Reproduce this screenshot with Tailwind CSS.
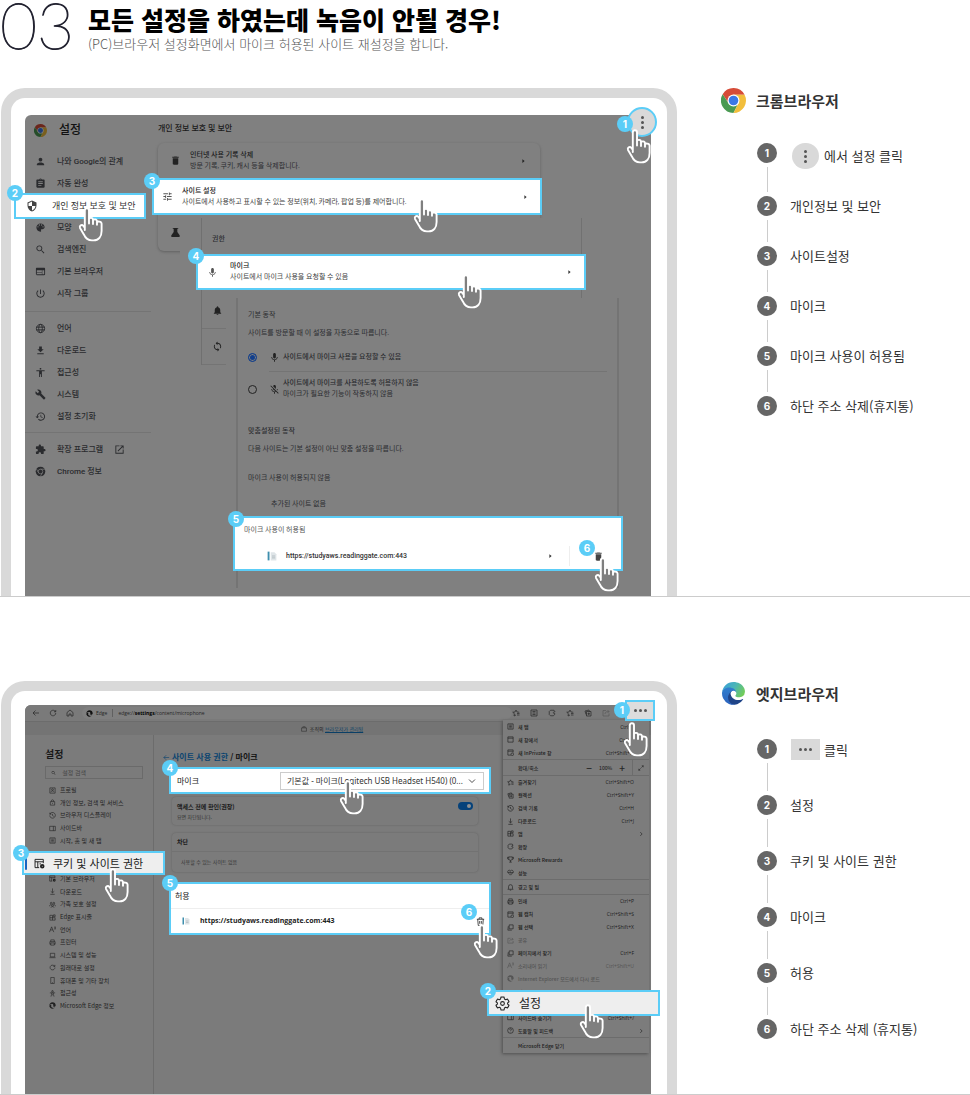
<!DOCTYPE html>
<html lang="ko">
<head>
<meta charset="utf-8">
<meta name="viewport" content="width=device-width, initial-scale=1">
<title>마이크 녹음 설정 안내</title>
<script src="https://cdn.jsdelivr.net/npm/@tailwindcss/browser@4"></script>
</head>
<body class="bg-white font-['Noto_Sans_CJK_KR',sans-serif] text-[#333]">

<!-- Icon library -->
<svg width="0" height="0" class="absolute" aria-hidden="true">
  <defs>
    <symbol id="hand" viewBox="0 0 26 35"><path d="M6.800 23V3.400c0-2.900 4.200-2.900 4.200 0v13.200V12.200c.3-1.900 4-1.800 4 .5v4.300v-3.500c.3-1.700 4-1.500 4 .8v3.500v-2.200c.3-1.600 4.600-1.400 4.600 1.200v7.300c0 5.500-3 9.300-8 9.300h-1.600c-4.200 0-6.500-2-8-5.700L2 20.900c-.9-2.200 1.700-3.900 3.300-2.100L6.800 21" fill="#7f7f7f" stroke="#fff" stroke-width="1.900" stroke-linejoin="round" stroke-linecap="round"/></symbol>
    <symbol id="chrome" viewBox="0 0 48 48"><path d="M24 13H45.300A24 24 0 0 0 3.200 12L14.500 29.500z" fill="#d64c38"/><path d="M14.500 29.500L3.200 12A24 24 0 0 0 24 48L33.500 29.500z" fill="#4a9a52"/><path d="M33.500 29.500L24 48A24 24 0 0 0 45.300 13H24z" fill="#f2be3c"/><circle cx="24" cy="24" r="11.500" fill="#fff"/><circle cx="24" cy="24" r="9.200" fill="#3b78e7"/></symbol>
    <linearGradient id="eg1" x1="0" x2="1" y1=".2" y2=".6"><stop offset="0" stop-color="#3a9fd8"/><stop offset=".5" stop-color="#4ab5b8"/><stop offset="1" stop-color="#72cc58"/></linearGradient>
    <linearGradient id="eg2" x1="0" x2="0" y1="0" y2="1"><stop offset="0" stop-color="#3180cf"/><stop offset="1" stop-color="#2b62bd"/></linearGradient>
    <symbol id="edge" viewBox="0 0 257 256"><path d="M231 190.500c-3.400 1.800-6.900 3.400-10.500 4.700a101.900 101.900 0 0 1-35.900 6.500c-47.300 0-88.500-32.500-88.500-74.300a31.500 31.500 0 0 1 16.400-27.300c-42.800 1.800-53.800 46.400-53.800 72.500 0 74 68.100 81.400 82.800 81.400 7.900 0 19.800-2.300 27-4.600l1.300-.4a128.300 128.300 0 0 0 66.600-52.800 4 4 0 0 0-5.400-5.700z" fill="#1f4488"/><path d="M105.700 241.400a79.200 79.200 0 0 1-22.700-21.300 80.700 80.700 0 0 1 29.500-120c3.200-1.500 8.500-4.100 15.600-4a32.400 32.400 0 0 1 25.700 13 31.900 31.900 0 0 1 6.300 18.700c0-.2 24.500-79.600-80-79.600-43.900 0-80 41.700-80 78.200a130.200 130.200 0 0 0 12.100 56 128 128 0 0 0 156.400 67 75.500 75.500 0 0 1-62.800-8z" fill="url(#eg2)"/><path d="M152.300 148.900c-.9 1-3.400 2.500-3.400 5.700 0 2.600 1.700 5.200 4.800 7.300 14.400 10.100 41.700 8.800 41.800 8.800 10.700 0 21.200-2.900 30.400-8.400A61.900 61.900 0 0 0 256.500 109c.3-22.400-8-37.300-11.300-43.900C224 23.700 178.200 0 128.500 0A128 128 0 0 0 .5 126.200c.5-36.500 36.800-66 80-66 3.500 0 23.500.3 42 10.100 16.300 8.600 24.900 19 30.800 29.200 6.200 10.700 7.300 24.100 7.300 29.500 0 5.300-2.700 13.300-8.300 19.900z" fill="url(#eg1)"/></symbol>
    <symbol id="edgeMono" viewBox="0 0 24 24"><path d="M12 1a11 11 0 0 1 11 10c0 4-4 5-6 5s-3-1-3-2 1-1 1-3-2-4-5-4-7 2-9 5C1 6 6 1 12 1zM9 9c-3 3-2 9 3 11 3 1 6 0 8-1-2 2-5 4-8 4C6 23 1 18 1 13c2-3 5-4 8-4z"/></symbol>
    <symbol id="person" viewBox="0 0 24 24"><path d="M12 12c2.210 0 4-1.790 4-4s-1.790-4-4-4-4 1.790-4 4 1.790 4 4 4zm0 2c-2.670 0-8 1.340-8 4v2h16v-2c0-2.660-5.330-4-8-4z"/></symbol>
    <symbol id="assign" viewBox="0 0 24 24"><path d="M19 3h-4.180C14.400 1.840 13.300 1 12 1s-2.400.84-2.820 2H5c-1.100 0-2 .9-2 2v14c0 1.100.9 2 2 2h14c1.100 0 2-.9 2-2V5c0-1.100-.9-2-2-2zm-7 0c.55 0 1 .45 1 1s-.45 1-1 1-1-.45-1-1 .45-1 1-1zm2 14H7v-2h7v2zm3-4H7v-2h10v2zm0-4H7V7h10v2z"/></symbol>
    <symbol id="shield" viewBox="0 0 24 24"><path d="M12 1L3 5v6c0 5.550 3.840 10.740 9 12 5.160-1.260 9-6.450 9-12V5l-9-4zm0 10.990h7c-.53 4.120-3.280 7.790-7 8.940V12H5V6.300l7-3.110v8.800z"/></symbol>
    <symbol id="palette" viewBox="0 0 24 24"><path d="M12 3c-4.970 0-9 4.030-9 9s4.030 9 9 9c.83 0 1.500-.67 1.500-1.500 0-.39-.15-.74-.39-1.010-.23-.26-.38-.61-.38-.99 0-.83.67-1.500 1.500-1.500H16c2.760 0 5-2.240 5-5 0-4.420-4.030-8-9-8zm-5.500 9c-.83 0-1.500-.67-1.500-1.500S5.670 9 6.500 9 8 9.670 8 10.500 7.330 12 6.500 12zm3-4C8.670 8 8 7.330 8 6.500S8.670 5 9.500 5s1.500.67 1.500 1.500S10.330 8 9.500 8zm5 0c-.83 0-1.500-.67-1.500-1.500S13.670 5 14.500 5s1.500.67 1.500 1.500S15.330 8 14.500 8zm3 4c-.83 0-1.500-.67-1.500-1.500S16.670 9 17.500 9s1.500.67 1.500 1.500-.67 1.500-1.500 1.500z"/></symbol>
    <symbol id="search" viewBox="0 0 24 24"><path d="M15.500 14h-.79l-.28-.27C15.410 12.590 16 11.110 16 9.500 16 5.910 13.090 3 9.500 3S3 5.910 3 9.500 5.910 16 9.500 16c1.610 0 3.090-.59 4.230-1.570l.27.28v.79l5 4.990L20.490 19l-4.990-5zm-6 0C7.010 14 5 11.990 5 9.500S7.010 5 9.500 5 14 7.010 14 9.500 11.990 14 9.500 14z"/></symbol>
    <symbol id="web" viewBox="0 0 24 24"><path d="M20 4H4c-1.100 0-2 .9-2 2v12c0 1.100.9 2 2 2h16c1.100 0 2-.9 2-2V6c0-1.100-.9-2-2-2zm-5 14H4v-4h11v4zm0-5H4V9h11v4zm5 5h-4V9h4v9z"/></symbol>
    <symbol id="power" viewBox="0 0 24 24"><path d="M13 3h-2v10h2V3zm4.830 2.170l-1.420 1.420C17.990 7.860 19 9.810 19 12c0 3.870-3.130 7-7 7s-7-3.130-7-7c0-2.190 1.010-4.140 2.580-5.420L6.170 5.170C4.230 6.820 3 9.260 3 12c0 4.970 4.030 9 9 9s9-4.030 9-9c0-2.740-1.230-5.180-3.170-6.830z"/></symbol>
    <symbol id="globe" viewBox="0 0 24 24"><g fill="none" stroke="currentColor" stroke-width="2"><circle cx="12" cy="12" r="9"/><ellipse cx="12" cy="12" rx="4" ry="9"/><path d="M3.500 9h17M3.500 15h17"/></g></symbol>
    <symbol id="down" viewBox="0 0 24 24"><path d="M19 9h-4V3H9v6H5l7 7 7-7zM5 18v2h14v-2H5z"/></symbol>
    <symbol id="access" viewBox="0 0 24 24"><path d="M12 2c1.100 0 2 .9 2 2s-.9 2-2 2-2-.9-2-2 .9-2 2-2zm9 7h-6v13h-2v-6h-2v6H9V9H3V7h18v2z"/></symbol>
    <symbol id="wrench" viewBox="0 0 24 24"><path d="M22.700 19l-9.100-9.100c.9-2.300.4-5-1.500-6.900-2-2-5-2.400-7.400-1.300L9 6 6 9 1.600 4.700C.4 7.100.9 10.100 2.900 12.100c1.900 1.900 4.600 2.400 6.900 1.500l9.100 9.100c.4.4 1 .4 1.400 0l2.300-2.300c.5-.4.5-1.100.1-1.400z"/></symbol>
    <symbol id="restore" viewBox="0 0 24 24"><path d="M13 3c-4.970 0-9 4.030-9 9H1l3.890 3.890.07.14L9 12H6c0-3.870 3.130-7 7-7s7 3.130 7 7-3.130 7-7 7c-1.930 0-3.680-.79-4.940-2.060l-1.420 1.420C8.270 19.990 10.510 21 13 21c4.970 0 9-4.030 9-9s-4.030-9-9-9zm-1 5v5l4.280 2.540.72-1.210-3.500-2.080V8H12z"/></symbol>
    <symbol id="ext" viewBox="0 0 24 24"><path d="M20.500 11H19V7c0-1.100-.9-2-2-2h-4V3.500C13 2.120 11.880 1 10.500 1S8 2.120 8 3.500V5H4c-1.100 0-1.990.9-1.990 2v3.800H3.500c1.490 0 2.700 1.210 2.700 2.700s-1.210 2.700-2.700 2.700H2V20c0 1.100.9 2 2 2h3.800v-1.500c0-1.490 1.210-2.700 2.700-2.700 1.490 0 2.700 1.210 2.700 2.700V22H17c1.100 0 2-.9 2-2v-4h1.500c1.380 0 2.500-1.120 2.500-2.500S21.880 11 20.500 11z"/></symbol>
    <symbol id="chromeMono" viewBox="0 0 24 24"><circle cx="12" cy="12" r="10.500"/><g fill="none" stroke="#808080" stroke-width="1.500"><circle cx="12" cy="12" r="5"/><path d="M12 7h10M7.700 14.500L2.800 6M16.300 14.500L11.500 23"/></g></symbol>
    <symbol id="open" viewBox="0 0 24 24"><path d="M19 19H5V5h7V3H3v18h18v-9h-2v7zM14 3v2h3.590l-9.830 9.830 1.410 1.410L19 6.410V10h2V3h-7z"/></symbol>
    <symbol id="trash" viewBox="0 0 24 24"><path d="M6 19c0 1.100.9 2 2 2h8c1.100 0 2-.9 2-2V7H6v12zM19 4h-3.500l-1-1h-5l-1 1H5v2h14V4z"/></symbol>
    <symbol id="tune" viewBox="0 0 24 24"><path d="M3 17v2h6v-2H3zM3 5v2h10V5H3zm10 16v-2h8v-2h-8v-2h-2v6h2zM7 9v2H3v2h4v2h2V9H7zm14 4v-2H11v2h10zm-6-4h2V7h4V5h-4V3h-2v6z"/></symbol>
    <symbol id="flask" viewBox="0 0 24 24"><path d="M6 2h12v2h-2v7l5 7c1 2 0 4-2 4H5c-2 0-3-2-2-4l5-7V4H6z"/></symbol>
    <symbol id="mic" viewBox="0 0 24 24"><path d="M12 14c1.660 0 3-1.340 3-3V5c0-1.660-1.340-3-3-3S9 3.340 9 5v6c0 1.660 1.340 3 3 3zm5.300-3c0 3-2.540 5.100-5.300 5.100S6.700 14 6.700 11H5c0 3.410 2.720 6.230 6 6.720V21h2v-3.280c3.280-.48 6-3.300 6-6.720h-1.700z"/></symbol>
    <symbol id="micoff" viewBox="0 0 24 24"><path d="M19 11h-1.700c0 .74-.16 1.430-.43 2.050l1.230 1.230c.56-.98.9-2.090.9-3.280zm-4.020.17L15 11V5c0-1.660-1.340-3-3-3S9 3.340 9 5v.18l5.980 5.990zM4.270 3L3 4.270l6.010 6.010V11c0 1.660 1.330 3 2.990 3 .22 0 .44-.03.65-.08l1.660 1.660c-.71.33-1.500.52-2.310.52-2.760 0-5.300-2.100-5.300-5.100H5c0 3.410 2.720 6.230 6 6.720V21h2v-3.280c.91-.13 1.770-.45 2.540-.9L19.730 21 21 19.730 4.270 3z"/></symbol>
    <symbol id="bell" viewBox="0 0 24 24"><path d="M12 22c1.100 0 2-.9 2-2h-4c0 1.100.89 2 2 2zm6-6v-5c0-3.070-1.640-5.640-4.500-6.320V4c0-.83-.67-1.500-1.500-1.500s-1.500.67-1.500 1.500v.68C7.630 5.360 6 7.920 6 11v5l-2 2v1h16v-1l-2-2z"/></symbol>
    <symbol id="sync" viewBox="0 0 24 24"><path d="M12 4V1L8 5l4 4V6c3.310 0 6 2.690 6 6 0 1.010-.25 1.970-.7 2.800l1.460 1.460C19.540 15.030 20 13.570 20 12c0-4.420-3.580-8-8-8zm0 14c-3.310 0-6-2.690-6-6 0-1.010.25-1.970.7-2.800L5.240 7.740C4.460 8.970 4 10.430 4 12c0 4.420 3.580 8 8 8v3l4-4-4-4v3z"/></symbol>
    <symbol id="tri" viewBox="0 0 8 10"><path d="M1 0l6 5-6 5z"/></symbol>
    <symbol id="fav" viewBox="0 0 16 16"><path d="M1 1h3v14H1z" fill="#3f8fae"/><path d="M6 2h6l3 3v10H6z" fill="#dfe5e8"/><path d="M8 8h5M8 11h5" stroke="#9aa7ad"/></symbol>
    <!-- Outline icons -->
    <symbol id="back" viewBox="0 0 16 16" fill="none" stroke="currentColor" stroke-width="1.400"><path d="M14 8H2M7 3L2 8l5 5"/></symbol>
    <symbol id="reload" viewBox="0 0 16 16" fill="none" stroke="currentColor" stroke-width="1.400"><path d="M13.500 8A5.500 5.500 0 1 1 11.500 3.800L13.500 5.500M13.500 2v3.500H10"/></symbol>
    <symbol id="home" viewBox="0 0 16 16" fill="none" stroke="currentColor" stroke-width="1.400"><path d="M2 7l6-5 6 5v7h-4v-4H6v4H2z"/></symbol>
    <symbol id="star" viewBox="0 0 16 16" fill="none" stroke="currentColor" stroke-width="1.400"><path d="M8 12l-4 2 .8-4.500L1.500 6.500 6 6l2-4 2 4 4.500.5M10 9h5M10 12h5"/></symbol>
    <symbol id="panel" viewBox="0 0 16 16" fill="none" stroke="currentColor" stroke-width="1.400"><path d="M2 2h12v12H2zM5 5h6M5 8h6M5 11h6"/></symbol>
    <symbol id="win" viewBox="0 0 16 16" fill="none" stroke="currentColor" stroke-width="1.400"><path d="M2 2h12v12H2zM2 5h12"/></symbol>
    <symbol id="winp" viewBox="0 0 16 16" fill="none" stroke="currentColor" stroke-width="1.400"><path d="M9 14H2V2h12v6M2 5h12"/><circle cx="12" cy="12" r="3"/></symbol>
    <symbol id="puzzle" viewBox="0 0 16 16" fill="none" stroke="currentColor" stroke-width="1.400"><path d="M10 2.500H5L2.500 5v6L5 13.500h6l2.500-3V9c-4 .5-4-3.500 0-3V4.500L12 2.500z"/></symbol>
    <symbol id="coll" viewBox="0 0 16 16" fill="none" stroke="currentColor" stroke-width="1.400"><path d="M4 11L2 4l8-2 1 3M5 5h9v9H5zM9.500 7v5M7 9.500h5"/></symbol>
    <symbol id="clock" viewBox="0 0 16 16" fill="none" stroke="currentColor" stroke-width="1.400"><path d="M2 5a6.500 6.500 0 1 1-.5 3M2 1.500V5h3.500M8 4.500V8l3 2"/></symbol>
    <symbol id="dl" viewBox="0 0 16 16" fill="none" stroke="currentColor" stroke-width="1.400"><path d="M8 1v10M4 7.500L8 11l4-3.500M3 14.500h10"/></symbol>
    <symbol id="apps" viewBox="0 0 16 16" fill="none" stroke="currentColor" stroke-width="1.400"><path d="M2 3h6v11H2zM2 8.500h12V14H8M10 2h4v4h-4z"/></symbol>
    <symbol id="cup" viewBox="0 0 16 16" fill="none" stroke="currentColor" stroke-width="1.400"><path d="M4 2h8v5c0 4-8 4-8 0zM4 3H1c0 4 1 5 3 5M12 3h3c0 4-1 5-3 5M8 10v4M5 14h6"/></symbol>
    <symbol id="heart" viewBox="0 0 16 16" fill="none" stroke="currentColor" stroke-width="1.400"><path d="M8 14L2 8c-2-4 3-7 6-4 3-3 8 0 6 4zM2 8h4l1-2 2 4 1-2h4"/></symbol>
    <symbol id="bello" viewBox="0 0 16 16" fill="none" stroke="currentColor" stroke-width="1.400"><path d="M2 12h12l-1.500-2V6a4.500 4.500 0 0 0-9 0v4zM6.500 14h3"/></symbol>
    <symbol id="print" viewBox="0 0 16 16" fill="none" stroke="currentColor" stroke-width="1.400"><path d="M4 6V2h8v4M4 12H2V6h12v6h-2M4 9h8v5H4z"/></symbol>
    <symbol id="copy" viewBox="0 0 16 16" fill="none" stroke="currentColor" stroke-width="1.400"><path d="M5 2h9v9H5zM3 5L2 14h9"/></symbol>
    <symbol id="share" viewBox="0 0 16 16" fill="none" stroke="currentColor" stroke-width="1.400"><path d="M8 3H2v11h12V9M6 10c0-4 3-5 8-5M11 2l3 3-3 3"/></symbol>
    <symbol id="read" viewBox="0 0 16 16" fill="none" stroke="currentColor" stroke-width="1.400"><path d="M1 14L6 2l5 12M3 9h6M12 2c2 1 2 4 0 5M14 1c2 2 2 5 0 7"/></symbol>
    <symbol id="help" viewBox="0 0 16 16" fill="none" stroke="currentColor" stroke-width="1.400"><circle cx="8" cy="8" r="6.500"/><path d="M6 6c0-3 4-2.500 4 0 0 1.500-2 1.500-2 3M8 11v1"/></symbol>
    <symbol id="user" viewBox="0 0 16 16" fill="none" stroke="currentColor" stroke-width="1.400"><path d="M2 2h12v12H2zM5 11c0-3 6-3 6 0"/><circle cx="8" cy="6" r="2"/></symbol>
    <symbol id="lock" viewBox="0 0 16 16" fill="none" stroke="currentColor" stroke-width="1.400"><path d="M3 6h10v8H3zM5.500 6V4c0-3 5-3 5 0v2M8 9v2"/></symbol>
    <symbol id="side" viewBox="0 0 16 16" fill="none" stroke="currentColor" stroke-width="1.400"><path d="M1.500 3h13v10h-13zM10 3v10"/></symbol>
    <symbol id="family" viewBox="0 0 16 16" fill="none" stroke="currentColor" stroke-width="1.400"><circle cx="5" cy="5" r="2"/><circle cx="11" cy="5" r="2"/><circle cx="8" cy="10" r="2"/><path d="M1.500 12c0-4 3-4 3.500-3M14.500 12c0-4-3-4-3.500-3M4.500 15c0-3 7-3 7 0"/></symbol>
    <symbol id="laptop" viewBox="0 0 16 16" fill="none" stroke="currentColor" stroke-width="1.400"><path d="M3 3h10v8H3zM1 13h14"/></symbol>
    <symbol id="phone" viewBox="0 0 16 16" fill="none" stroke="currentColor" stroke-width="1.400"><path d="M4 1h8v14H4zM7 13h2"/></symbol>
    <symbol id="man" viewBox="0 0 16 16" fill="none" stroke="currentColor" stroke-width="1.400"><circle cx="8" cy="3" r="1.800"/><path d="M2 6.500h12M6 6.500V10L4.500 15M10 6.500V10l1.500 5M8 10v2"/></symbol>
    <symbol id="caseI" viewBox="0 0 16 16" fill="none" stroke="currentColor" stroke-width="1.400"><path d="M1.500 5h13v9h-13zM5 5V2h6v3"/></symbol>
    <symbol id="chev" viewBox="0 0 16 16" fill="none" stroke="currentColor" stroke-width="1.600"><path d="M6 3l5 5-5 5"/></symbol>
    <symbol id="chevd" viewBox="0 0 16 16" fill="none" stroke="currentColor" stroke-width="1.600"><path d="M2 5l6 6 6-6"/></symbol>
    <symbol id="full" viewBox="0 0 16 16" fill="none" stroke="currentColor" stroke-width="1.600"><path d="M9 7l5-5M10 2h4v4M7 9l-5 5M6 14H2v-4"/></symbol>
    <symbol id="bin" viewBox="0 0 16 16" fill="none" stroke="currentColor" stroke-width="1.400"><path d="M1.500 4h13M5.500 4V1.500h5V4M3 4l1 11h8l1-11M6.500 7v5M9.500 7v5"/></symbol>
    <symbol id="cookie" viewBox="0 0 16 16" fill="none" stroke="currentColor" stroke-width="1.400"><path d="M7.500 14h-6V2h12v5.500M1.500 5.500h12M5.500 5.500V14M8 8.500h2"/><circle cx="12" cy="12" r="2" stroke-width="2.600"/></symbol>
    <symbol id="gear" viewBox="0 0 24 24" fill="none" stroke="currentColor" stroke-width="1.700" stroke-linejoin="round"><path d="M12 1.500c.9 0 1.700.1 2.500.3l.6 3 2 1.100 2.800-1c1.100 1.300 2 2.700 2.500 4.300L20.200 11.100v1.800l2.200 1.900c-.5 1.600-1.400 3-2.500 4.300l-2.800-1-2 1.100-.6 3c-1.600.4-3.400.4-5 0l-.6-3-2-1.100-2.800 1c-1.100-1.300-2-2.700-2.500-4.300l2.200-1.900v-1.800L1.600 9.200c.5-1.600 1.400-3 2.500-4.300l2.800 1 2-1.100.6-3c.8-.2 1.600-.3 2.500-.3z"/><circle cx="12" cy="12" r="3"/></symbol>
  </defs>
</svg>

<header class="flex h-[88px] items-start">
  <span class="w-[88px] shrink-0 font-['Lato'] text-[64px] leading-[50px] font-extralight text-[#222230] [-webkit-text-stroke:1px_#222230]">03</span>
  <div class="pt-1">
    <h1 class="text-[25px] leading-[30px] font-black text-black">모든 설정을 하였는데 녹음이 안될 경우!</h1>
    <p class="text-[13px] leading-5 font-light text-[#555]">(PC)브라우저 설정화면에서 마이크 허용된 사이트 재설정을 합니다.</p>
  </div>
</header>

<main>
<!-- Chrome -->
<section class="flex border-b border-[#ccc]">
  <div class="ml-px min-w-0 flex-1 rounded-t-[24px] border-x-10 border-t-10 border-[#d9d9d9] pt-[17px] pr-4 pl-[14px]">
    <div class="relative flex min-h-[481px] rounded-tl-md bg-[#808080] font-['Roboto','Noto_Sans_CJK_KR',sans-serif] text-[7px] leading-[11px] text-[#2c2d30]">

      <nav class="w-[126px] shrink-0 text-[8px] font-medium text-[#2a2b2e]">
        <h2 class="flex h-[35px] items-center gap-3 pb-1 pl-[9px] text-[12px] font-medium text-[#111]"><svg class="size-[13px] brightness-50"><use href="#chrome"/></svg>설정</h2>
        <ul data-nav="chrome1"></ul>
        <ul class="mt-[7px] border-t border-[#747474] pt-[5px]" data-nav="chrome2"></ul>
        <ul class="mt-[5px] border-t border-[#747474] pt-[5px]" data-nav="chrome3"></ul>
      </nav>

      <div class="min-w-0 flex-1 pr-[111px] pl-[7px]">
        <h3 class="flex h-7 items-center pb-[2px] text-[8px] font-medium text-[#1a1a1a]">개인 정보 보호 및 보안</h3>
        <div class="h-[108px] rounded-md shadow-[0_1px_3px_#606060]">
          <button type="button" class="flex h-[35px] w-full items-center gap-[9px] pr-[15px] pl-3 text-left">
            <svg class="size-[11px] fill-[#222]"><use href="#trash"/></svg>
            <span class="flex-1"><b class="block font-medium text-[#1c1c1e]">인터넷 사용 기록 삭제</b>방문 기록, 쿠키, 캐시 등을 삭제합니다.</span>
            <svg class="h-1 w-[3px] fill-[#222]"><use href="#tri"/></svg>
          </button>
          <svg class="mt-[49px] ml-3 size-[11px] fill-[#222]"><use href="#flask"/></svg>
        </div>
      </div>

      <!-- Permission panel stacked over the privacy card -->
      <div class="absolute top-[103px] right-[69px] left-[155px] h-[80px] bg-[#808080]"></div>
      <div class="absolute top-[103px] left-[176px] flex h-[147px] w-8 flex-col items-center border-l border-[#707070] bg-[#808080] pt-[87px]">
        <svg class="size-[11px] fill-[#222]"><use href="#bell"/></svg>
        <span class="mt-3 w-6 self-start border-t border-[#747474]"></span>
        <svg class="mt-3 size-[11px] fill-[#222]"><use href="#sync"/></svg>
        <span class="mt-3 w-6 self-start border-t border-[#747474]"></span>
      </div>
      <div class="absolute top-[103px] right-[69px] left-[177px] h-[80px] border-r border-[#717171] px-[10px] pt-4 font-medium">권한</div>

      <!-- Microphone panel -->
      <fieldset class="absolute top-[183px] right-[32px] left-[211px] min-h-[290px] border-x-2 border-[#747474] bg-[#808080] px-[10px]">
        <p class="pt-3">기본 동작</p>
        <p class="mt-[7px]">사이트를 방문할 때 이 설정을 자동으로 따릅니다.</p>
        <label class="mt-[5px] flex h-[27px] items-center">
          <input type="radio" name="mic" checked class="size-[9px] appearance-none rounded-full border border-[#123f8c] bg-[#123f8c] shadow-[inset_0_0_0_1px_#808080]">
          <svg class="ml-3 size-[11px] fill-[#222]"><use href="#mic"/></svg><span class="ml-[3px] font-medium">사이트에서 마이크 사용을 요청할 수 있음</span>
        </label>
        <div class="ml-[21px] border-t border-[#747474]"></div>
        <label class="mt-[6px] flex items-center">
          <input type="radio" name="mic" class="size-[9px] appearance-none rounded-full border border-[#222]">
          <svg class="ml-3 size-[11px] fill-[#222]"><use href="#micoff"/></svg><span class="ml-[3px]"><b class="block font-medium">사이트에서 마이크를 사용하도록 허용하지 않음</b>마이크가 필요한 기능이 작동하지 않음</span>
        </label>
        <p class="mt-[26px] font-medium">맞춤설정된 동작</p>
        <p class="mt-[7px]">다음 사이트는 기본 설정이 아닌 맞춤 설정을 따릅니다.</p>
        <p class="mt-[18px]">마이크 사용이 허용되지 않음</p>
        <p class="mt-[15px] ml-[23px]">추가된 사이트 없음</p>
      </fieldset>

      <!-- Highlighted steps -->
      <button type="button" aria-label="더보기" class="absolute -top-2 right-[-6px] flex size-[30px] flex-col items-center justify-center gap-[2px] rounded-full border-2 border-[#5bcdf7] bg-[#d9d9d9]"><i class="size-[3px] rounded-full bg-[#555]"></i><i class="size-[3px] rounded-full bg-[#555]"></i><i class="size-[3px] rounded-full bg-[#555]"></i></button>
      <a href="#" class="absolute top-[78px] left-[-11px] flex h-[26px] w-[132px] items-center gap-[14px] border-2 border-[#5bcdf7] bg-white pl-[10px] text-[9px] text-[#333]"><svg class="size-3 fill-[#444]"><use href="#shield"/></svg>개인 정보 보호 및 보안</a>
      <button type="button" class="absolute top-[63px] right-[109px] left-[127px] flex h-[37px] items-center gap-[9px] border-2 border-[#5bcdf7] bg-white pr-[13px] pl-[8px] text-left text-[#444]">
        <svg class="size-[11px] fill-[#555]"><use href="#tune"/></svg>
        <span class="flex-1"><b class="block font-medium text-[#222]">사이트 설정</b>사이트에서 사용하고 표시할 수 있는 정보(위치, 카메라, 팝업 등)를 제어합니다.</span>
        <svg class="h-1 w-[3px] fill-[#333]"><use href="#tri"/></svg>
      </button>
      <button type="button" class="absolute top-[139px] right-[65px] left-[171px] flex h-9 items-center gap-3 border-2 border-[#5bcdf7] bg-white pr-[13px] pl-[9px] text-left text-[#444]">
        <svg class="size-[11px] fill-[#555]"><use href="#mic"/></svg>
        <span class="flex-1"><b class="block font-medium text-[#222]">마이크</b>사이트에서 마이크 사용을 요청할 수 있음</span>
        <svg class="h-1 w-[3px] fill-[#333]"><use href="#tri"/></svg>
      </button>
      <div class="absolute top-[401px] right-[28px] left-[208px] h-[55px] border-2 border-[#5bcdf7] bg-white text-[#555]">
        <p class="pt-[7px] pl-[9px]">마이크 사용이 허용됨</p>
        <div class="mt-[9px] flex h-[22px] items-center pr-[17px] pl-8">
          <svg class="size-[10px]"><use href="#fav"/></svg>
          <a href="#" class="ml-[9px] flex-1 font-medium text-[#333]">https://studyaws.readinggate.com:443</a>
          <svg class="h-1 w-[3px] fill-[#333]"><use href="#tri"/></svg>
          <i class="mx-[17px] h-5 border-l border-[#eee]"></i>
          <button type="button" aria-label="삭제" class="ml-[6px]"><svg class="size-[11px] fill-[#444]"><use href="#trash"/></svg></button>
        </div>
      </div>

      <span class="absolute top-[1px] right-[18px] size-4 rounded-full bg-[#5bcdf7] text-center font-['Inter'] text-[10px] leading-4 font-bold text-white">1</span>
      <span class="absolute top-[70px] left-[-18px] size-4 rounded-full bg-[#5bcdf7] text-center font-['Inter'] text-[10px] leading-4 font-bold text-white">2</span>
      <span class="absolute top-[58px] left-[119px] size-4 rounded-full bg-[#5bcdf7] text-center font-['Inter'] text-[10px] leading-4 font-bold text-white">3</span>
      <span class="absolute top-[133px] left-[163px] size-4 rounded-full bg-[#5bcdf7] text-center font-['Inter'] text-[10px] leading-4 font-bold text-white">4</span>
      <span class="absolute top-[396px] left-[203px] size-4 rounded-full bg-[#5bcdf7] text-center font-['Inter'] text-[10px] leading-4 font-bold text-white">5</span>
      <span class="absolute top-[425px] right-[56px] size-4 rounded-full bg-[#5bcdf7] text-center font-['Inter'] text-[10px] leading-4 font-bold text-white">6</span>
      <svg class="absolute top-[14px] right-[-1px] h-[35px] w-[26px]"><use href="#hand"/></svg>
      <svg class="absolute top-[92px] left-[53px] h-[35px] w-[26px]"><use href="#hand"/></svg>
      <svg class="absolute top-[83px] right-[212px] h-[35px] w-[26px]"><use href="#hand"/></svg>
      <svg class="absolute top-[159px] right-[168px] h-[35px] w-[26px]"><use href="#hand"/></svg>
      <svg class="absolute top-[442px] right-[31px] h-[35px] w-[26px]"><use href="#hand"/></svg>
    </div>
  </div>

  <aside class="w-[293px] shrink-0 pl-11">
    <h2 class="flex h-[25px] items-center gap-[10px] text-[15px] leading-5 font-bold"><svg class="size-[25px]"><use href="#chrome"/></svg>크롬브라우저</h2>
    <ol class="mt-[30px] pl-9 text-[13px] leading-5" data-steps="chrome"></ol>
  </aside>
</section>

<!-- Edge -->
<section class="mt-[84px] flex border-b border-[#ccc]">
  <div class="ml-px min-w-0 flex-1 rounded-t-[24px] border-x-10 border-t-10 border-[#d9d9d9] pt-[14px] pr-4 pl-[14px]">
    <div class="relative min-h-[389px] rounded-tl-md bg-[#7b7b7b] text-[6px] leading-[8px] text-[#262626]">
      <div class="flex h-4 items-center rounded-tl-md bg-[#7a7a7a] pl-[7px] text-[5px]">
        <svg class="size-2"><use href="#back"/></svg>
        <svg class="ml-[9px] size-2"><use href="#reload"/></svg>
        <svg class="ml-[9px] size-2"><use href="#home"/></svg>
        <div class="ml-2 flex h-3 flex-1 items-center rounded-full bg-[#7f7f7f] pl-1 font-['Open_Sans']"><svg class="size-[7px] fill-[#111]"><use href="#edgeMono"/></svg><span class="ml-[3px]">Edge</span><i class="mx-[5px] h-2 border-l border-[#606060]"></i><span>edge://<b class="text-black">settings</b>/content/microphone</span></div>
        <div class="flex items-center gap-[10px] pr-[41px]"><svg class="size-2"><use href="#star"/></svg><svg class="size-2"><use href="#panel"/></svg><svg class="size-2"><use href="#puzzle"/></svg><svg class="size-2"><use href="#star"/></svg><svg class="size-2"><use href="#coll"/></svg><svg class="size-2 opacity-40"><use href="#share"/></svg></div>
      </div>
      <div class="flex h-[14px] items-center justify-center gap-[3px] border-t border-[#6c6c6c] bg-[#747474] pr-3 text-[5px]"><svg class="size-[6px]"><use href="#caseI"/></svg><span>조직의 <a href="#" class="text-[#0a3f66] underline">브라우저가 관리됨</a></span></div>
      <div class="flex min-h-[359px]">
        <nav class="w-[129px] shrink-0 border-r border-[#6c6c6c] pr-[10px] pl-5">
          <h2 class="pt-[13px] text-[10px] leading-3 font-bold text-[#181818]">설정</h2>
          <label class="mt-[6px] flex h-[13px] items-center gap-[6px] border border-[#6a6a6a] pl-[5px]"><svg class="size-[6px] fill-[#222]"><use href="#search"/></svg><input type="search" aria-label="설정 검색" placeholder="설정 검색" class="w-full min-w-0 bg-transparent text-[6px] outline-none placeholder:text-[#444]"></label>
          <ul class="mt-[5px] flex h-[228px] flex-col justify-between pl-1 text-[#222]" data-nav="edge"></ul>
        </nav>
        <div class="min-w-0 flex-1 pr-[173px] pl-[9px]">
          <h3 class="flex items-center gap-[2px] pt-4 text-[8px] leading-3 font-bold text-[#111]"><svg class="size-[7px] text-[#0a4470]"><use href="#back"/></svg><span><a href="#" class="text-[#0a4470]">사이트 사용 권한</a> / 마이크</span></h3>
          <div class="mt-[34px] ml-[9px] flex h-7 items-start justify-between rounded-sm p-[5px] shadow-[0_0_2px_#606060]">
            <label for="ask" class="pt-px"><b class="block font-bold text-[#1a1a1a]">액세스 전에 확인(권장)</b><span class="block pt-[2px] text-[5px] text-[#333]">요면 차단됩니다.</span></label>
            <span class="relative flex"><input id="ask" type="checkbox" checked class="h-2 w-[15px] appearance-none rounded-full bg-[#06427a]"><i class="pointer-events-none absolute top-[2px] right-[2px] size-1 rounded-full bg-[#909090]"></i></span>
          </div>
          <div class="mt-2 ml-[9px] h-[39px] rounded-sm shadow-[0_0_2px_#606060]">
            <b class="flex h-[19px] items-center border-b border-[#727272] pl-[5px] font-bold text-[#1a1a1a]">차단</b>
            <p class="flex h-[19px] items-center pl-[9px] text-[5px] text-[#333]">사용할 수 있는 사이트 없음</p>
          </div>
        </div>
      </div>

      <!-- Browser menu -->
      <div class="absolute top-[15px] right-[2px] w-[146px] bg-[#7c7c7c] text-[5px] font-medium shadow-[-1px_1px_3px_#505050]">
        <ul class="h-[40px] border-b border-[#6c6c6c]" data-menu="a"></ul>
        <div class="flex h-4 items-center border-b border-[#6c6c6c] pl-[15px]"><span class="flex-1">확대/축소</span><button type="button" class="text-[10px]" aria-label="축소">−</button><span class="mx-[7px]">100%</span><button type="button" class="text-[10px]" aria-label="확대">+</button><i class="ml-[7px] h-4 border-l border-[#6c6c6c]"></i><svg class="mr-[5px] ml-[5px] size-[6px]"><use href="#full"/></svg></div>
        <ul class="h-[104px] border-b border-[#6c6c6c]" data-menu="b"></ul>
        <ul class="h-[15px] border-b border-[#6c6c6c]" data-menu="c"></ul>
        <ul class="h-[143px] border-b border-[#6c6c6c]" data-menu="d"></ul>
        <ul class="h-[15px]" data-menu="e"></ul>
      </div>

      <!-- Highlighted steps -->
      <button type="button" aria-label="설정 및 기타" class="absolute top-[-5px] right-[-4px] flex h-[21px] w-[30px] items-center justify-center gap-[2px] border-2 border-[#5bcdf7] bg-[#ddd]"><i class="size-[3px] rounded-full bg-[#555]"></i><i class="size-[3px] rounded-full bg-[#555]"></i><i class="size-[3px] rounded-full bg-[#555]"></i></button>
      <a href="#" class="absolute top-[285px] right-[-9px] flex h-[26px] w-[173px] items-center gap-[9px] border-2 border-[#5bcdf7] bg-[#eee] pl-[6px] text-[12px] text-[#222]"><svg class="size-[15px]"><use href="#gear"/></svg>설정</a>
      <a href="#" class="absolute top-[146px] left-[-3px] flex h-6 w-[143px] items-center border-2 border-[#5bcdf7] bg-[#eee] pl-px text-[11px] text-[#222]"><i class="h-[14px] w-[2px] rounded bg-[#1765c1]"></i><svg class="mr-2 ml-[7px] size-[11px]"><use href="#cookie"/></svg>쿠키 및 사이트 권한</a>
      <div class="absolute top-[62px] right-[160px] left-[144px] flex h-[27px] items-center justify-between border-2 border-[#5bcdf7] bg-white pr-[5px] pl-[6px] text-[8px] text-[#222]">
        <label for="micsel">마이크</label>
        <span class="relative flex items-center"><select id="micsel" class="h-[18px] w-[204px] appearance-none border border-[#ccc] bg-white px-[6px] font-['Noto_Sans','Noto_Sans_CJK_KR',sans-serif] text-[8px] text-[#333]"><option>기본값 - 마이크(Logitech USB Headset H540) (0...</option></select><svg class="pointer-events-none absolute right-2 size-2"><use href="#chevd"/></svg></span>
      </div>
      <div class="absolute top-[177px] right-[160px] left-[144px] h-[53px] border-2 border-[#5bcdf7] bg-white text-[8px] text-[#222]">
        <p class="flex h-[25px] items-center border-b border-[#eee] pl-1">허용</p>
        <div class="flex h-6 items-center pr-1 pl-[11px]"><svg class="size-2"><use href="#fav"/></svg><a href="#" class="ml-[10px] flex-1 font-['Open_Sans'] text-[7px] font-bold">https://studyaws.readinggate.com:443</a><button type="button" aria-label="삭제"><svg class="size-[9px]"><use href="#bin"/></svg></button></div>
      </div>

      <span class="absolute top-[-3px] right-[21px] size-4 rounded-full bg-[#5bcdf7] text-center font-['Inter'] text-[10px] leading-4 font-bold text-white">1</span>
      <span class="absolute top-[278px] right-[155px] size-4 rounded-full bg-[#5bcdf7] text-center font-['Inter'] text-[10px] leading-4 font-bold text-white">2</span>
      <span class="absolute top-[140px] left-[-12px] size-4 rounded-full bg-[#5bcdf7] text-center font-['Inter'] text-[10px] leading-4 font-bold text-white">3</span>
      <span class="absolute top-[55px] left-[137px] size-4 rounded-full bg-[#5bcdf7] text-center font-['Inter'] text-[10px] leading-4 font-bold text-white">4</span>
      <span class="absolute top-[170px] left-[137px] size-4 rounded-full bg-[#5bcdf7] text-center font-['Inter'] text-[10px] leading-4 font-bold text-white">5</span>
      <span class="absolute top-[199px] right-[174px] size-4 rounded-full bg-[#5bcdf7] text-center font-['Inter'] text-[10px] leading-4 font-bold text-white">6</span>
      <svg class="absolute top-[17px] right-[2px] h-[35px] w-[26px]"><use href="#hand"/></svg>
      <svg class="absolute top-[299px] right-[46px] h-[35px] w-[26px]"><use href="#hand"/></svg>
      <svg class="absolute top-[163px] left-[79px] h-[35px] w-[26px]"><use href="#hand"/></svg>
      <svg class="absolute top-[75px] right-[286px] h-[35px] w-[26px]"><use href="#hand"/></svg>
      <svg class="absolute top-[219px] right-[152px] h-[35px] w-[26px]"><use href="#hand"/></svg>
    </div>
  </div>

  <aside class="w-[293px] shrink-0 pl-11">
    <h2 class="flex h-[25px] items-center gap-[10px] text-[15px] leading-5 font-bold"><svg class="size-[25px] p-px"><use href="#edge"/></svg>엣지브라우저</h2>
    <ol class="mt-[33px] pl-9 text-[13px] leading-5" data-steps="edge"></ol>
  </aside>
</section>
</main>

<script>
  // An entry of null keeps the row's place free for the highlighted step above it.
  const nav = {
    chrome1: [['person','나와 Google의 관계'],['assign','자동 완성'],null,['palette','모양'],['search','검색엔진'],['web','기본 브라우저'],['power','시작 그룹']],
    chrome2: [['globe','언어'],['down','다운로드'],['access','접근성'],['wrench','시스템'],['restore','설정 초기화']],
    chrome3: [['ext','확장 프로그램','open'],['chromeMono','Chrome 정보']],
    edge: [['user','프로필'],['lock','개인 정보, 검색 및 서비스'],['clock','브라우저 디스플레이'],['side','사이드바'],['panel','시작, 홈 및 새 탭'],null,null,['cookie','기본 브라우저'],['dl','다운로드'],['family','가족 보호 설정'],['apps','Edge 표시줄'],['read','언어'],['print','프린터'],['laptop','시스템 및 성능'],['reload','원래대로 설정'],['phone','휴대폰 및 기타 장치'],['man','접근성'],['edgeMono','Microsoft Edge 정보']]
  };
  document.querySelectorAll('[data-nav]').forEach(ul => {
    const edge = ul.dataset.nav === 'edge';
    ul.innerHTML = nav[ul.dataset.nav].map(item => {
      if (!item) return edge ? '<li class="h-3"></li>' : '<li class="h-[22px]"></li>';
      const [icon, text, extra] = item;
      return edge
        ? `<li><a href="#" class="flex h-3 items-center gap-1"><svg class="size-[7px] fill-current"><use href="#${icon}"/></svg>${text}</a></li>`
        : `<li><a href="#" class="flex h-[22px] items-center gap-[11px] pl-[10px]"><svg class="size-[11px] fill-current"><use href="#${icon}"/></svg>${text}${extra ? `<svg class="size-[11px] fill-current"><use href="#${extra}"/></svg>` : ''}</a></li>`;
    }).join('');
  });

  const menu = {
    a: [['panel','새 탭','Ctrl+T'],['win','새 창에서','Ctrl+N'],['winp','새 InPrivate 창','Ctrl+Shift+N']],
    b: [['star','즐겨찾기','Ctrl+Shift+O'],['coll','컬렉션','Ctrl+Shift+Y'],['clock','검색 기록','Ctrl+H'],['dl','다운로드','Ctrl+J'],['apps','앱','>'],['puzzle','확장',''],['cup','Microsoft Rewards',''],['heart','성능','']],
    c: [['bello','경고 및 팁','']],
    d: [['print','인쇄','Ctrl+P'],['winp','웹 캡처','Ctrl+Shift+S'],['copy','웹 선택','Ctrl+Shift+X'],['share','공유','','dim'],['copy','페이지에서 찾기','Ctrl+F'],['read','소리내어 읽기','Ctrl+Shift+U','dim'],['edgeMono','Internet Explorer 모드에서 다시 로드','','dim'],['','기타 도구','>'],null,['side','사이드바 숨기기','Ctrl+Shift+/'],['help','도움말 및 피드백','>']],
    e: [['','Microsoft Edge 닫기','']]
  };
  document.querySelectorAll('[data-menu]').forEach(ul => {
    ul.classList.add('flex', 'flex-col');
    ul.innerHTML = menu[ul.dataset.menu].map(item => {
      if (!item) return '<li class="flex-1"></li>';
      const [icon, text, key, dim] = item;
      return `<li class="flex min-h-0 flex-1"><a href="#" class="flex flex-1 items-center ${dim ? 'text-[#555]' : 'text-[#1c1c1c]'}"><svg class="mr-1 ml-1 size-[7px] fill-current">${icon ? `<use href="#${icon}"/>` : ''}</svg><span class="flex-1">${text}</span>${key === '>' ? '<svg class="mr-[5px] size-[6px]"><use href="#chev"/></svg>' : `<span class="mr-[15px] font-['Open_Sans']">${key}</span>`}</a></li>`;
    }).join('');
  });

  const dots = '<i class="size-[3px] rounded-full bg-[#555]"></i>'.repeat(3);
  const steps = {
    chrome: [`<span class="ml-[2px] mr-[5px] inline-flex h-[26px] w-[27px] flex-col items-center justify-center gap-[2px] rounded-full bg-[#d9d9d9]">${dots}</span>에서 설정 클릭`,'개인정보 및 보안','사이트설정','마이크','마이크 사용이 허용됨','하단 주소 삭제(휴지통)'],
    edge: [`<span class="ml-px mr-1 inline-flex h-[21px] w-[29px] items-center justify-center gap-[2px] bg-[#d9d9d9]">${dots}</span>클릭`,'설정','쿠키 및 사이트 권한','마이크','허용','하단 주소 삭제 (휴지통)']
  };
  document.querySelectorAll('[data-steps]').forEach(ol => {
    const key = ol.dataset.steps, list = steps[key];
    ol.innerHTML = list.map((text, i) => {
      const last = i === list.length - 1;
      const height = last ? 'min-h-5' : key === 'edge' ? 'min-h-14' : i === 0 ? 'min-h-[53px]' : 'min-h-[50px]';
      return `<li class="flex gap-[13px] ${height}"><div class="flex w-5 flex-col items-center"><span class="flex size-5 items-center justify-center rounded-full bg-[#666] font-['Inter'] text-[10px] font-bold text-white">${i + 1}</span>${last ? '' : '<i class="my-1 flex-1 border-l border-[#ccc]"></i>'}</div><div class="flex items-center self-start">${text}</div></li>`;
    }).join('');
  });
</script>
</body>
</html>
